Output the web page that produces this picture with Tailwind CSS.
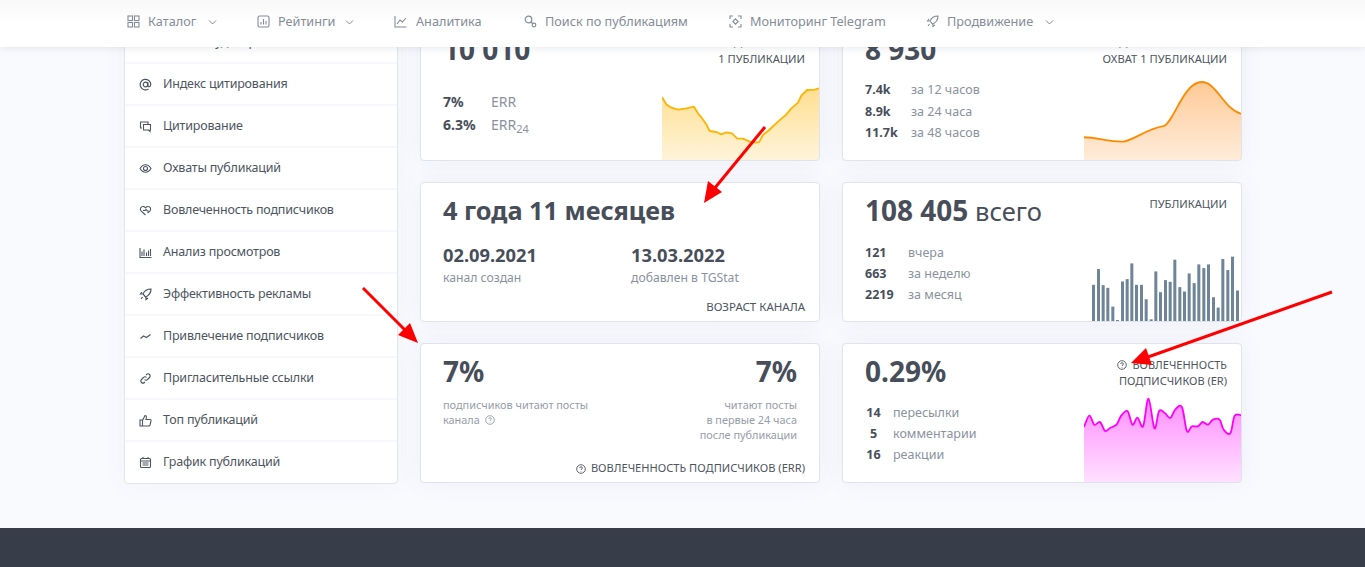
<!DOCTYPE html>
<html lang="ru">
<head>
<meta charset="UTF-8">
<title>TGStat</title>
<script src="https://cdn.jsdelivr.net/npm/@tailwindcss/browser@4"></script>
</head>
<body class="relative h-[567px] overflow-hidden bg-[#f9fafe] font-['Noto_Sans',sans-serif] text-[#474e5a]">

<!-- шапка -->
<header class="relative z-10 h-[47px] bg-gradient-to-b from-[#f8f8f8] via-white to-white shadow-[0_1px_8px_rgba(60,70,90,0.12)]">
    <nav class="flex h-full items-center pb-[3px] pl-[127px] text-[12.7px] text-[#848c97]">
        <a class="flex w-[130px] items-center">
            <svg class="mr-[8px] h-[13px] w-[13px]" viewBox="0 0 13 13" fill="none" stroke="currentColor" stroke-width="1.1"><rect x="1" y="1" width="4.5" height="4.5"/><rect x="7.5" y="1" width="4.5" height="4.5"/><rect x="1" y="7.5" width="4.5" height="4.5"/><rect x="7.5" y="7.5" width="4.5" height="4.5"/></svg>
            <span class="w-[60px]">Каталог</span>
            <svg class="h-[8px] w-[9px]" viewBox="0 0 9 8" fill="none" stroke="currentColor"><path d="M1 2.5l3.5 3.5L8 2.5"/></svg>
        </a>
        <a class="flex w-[137px] items-center">
            <svg class="mr-[8px] h-[13px] w-[13px]" viewBox="0 0 13 13" fill="none" stroke="currentColor" stroke-width="1.1"><rect x="1" y="1" width="11" height="11" rx="1.5"/><path d="M4 9.5V7M6.500 9.500V4M9 9.500V6"/></svg>
            <span class="w-[67px]">Рейтинги</span>
            <svg class="h-[8px] w-[9px]" viewBox="0 0 9 8" fill="none" stroke="currentColor"><path d="M1 2.5l3.500 3.500L8 2.500"/></svg>
        </a>
        <a class="flex w-[130px] items-center">
            <svg class="mr-[9px] h-[13px] w-[13px]" viewBox="0 0 13 13" fill="none" stroke="currentColor" stroke-width="1.1"><path d="M1 1v11h11.500M3 9l3-4 2.500 2L12 3"/></svg>
            <span>Аналитика</span>
        </a>
        <a class="flex w-[205px] items-center">
            <svg class="mr-[8px] h-[13px] w-[13px]" viewBox="0 0 13 13" fill="none" stroke="currentColor" stroke-width="1.2"><circle cx="4.500" cy="4.500" r="3.300"/><path d="M7 7l1.500 1.500"/><circle cx="10" cy="10" r="1.800"/></svg>
            <span>Поиск по публикациям</span>
        </a>
        <a class="flex w-[197px] items-center">
            <svg class="mr-[8px] h-[13px] w-[13px]" viewBox="0 0 13 13" fill="none" stroke="currentColor" stroke-width="1.100"><path d="M1 4V1h3M9 1h3v3M12 9v3H9M4 12H1V9"/><path d="M6.500 3.800l2.700 2.700-2.700 2.700-2.700-2.700z"/></svg>
            <span>Мониторинг Telegram</span>
        </a>
        <a class="flex items-center">
            <svg class="mr-[8px] h-[13px] w-[13px]" viewBox="0 0 13 13" fill="none" stroke="currentColor" stroke-width="1.100"><path d="M12 1c-4 0-6.500 1.500-8 5L6.500 9c3.500-1.500 5.500-4 5.500-8zM4 6H1.500L3 4M7 9v2.500L9 10M3.500 9l-1.500 2"/></svg>
            <span class="w-[98px]">Продвижение</span>
            <svg class="h-[8px] w-[9px]" viewBox="0 0 9 8" fill="none" stroke="currentColor"><path d="M1 2.500l3.500 3.500L8 2.500"/></svg>
        </a>
    </nav>
</header>

<!-- контент, начало прокручено под шапку -->
<main class="-mt-[26px] flex items-start pl-[124px]">
    <aside class="w-[274px] overflow-hidden rounded-[4px] border border-[#e2e5ec] bg-white text-[12.5px] tracking-[-0.2px] text-[#4d5560] shadow-[0_0_24px_rgba(90,100,140,0.05)]">
        <a class="flex h-[42px] items-center border-b-2 border-[#f7f8fc] pl-[14px]"><span class="mr-[11px] h-[13px] w-[13px]"></span>Анализ аудитории</a>
        <a class="flex h-[42px] items-center border-b-2 border-[#f7f8fc] pl-[14px]">
            <svg class="mr-[11px] h-[13px] w-[13px]" viewBox="0 0 13 13" fill="none" stroke="currentColor" stroke-width="1.200"><circle cx="6.500" cy="6.500" r="2.300"/><path d="M8.800 4.200v3.300c0 2 3 1.500 3-1A5.300 5.300 0 1 0 9.500 11"/></svg>Индекс цитирования</a>
        <a class="flex h-[42px] items-center border-b-2 border-[#f7f8fc] pl-[14px]">
            <svg class="mr-[11px] h-[13px] w-[13px]" viewBox="0 0 13 13" fill="none" stroke="currentColor" stroke-width="1.100"><path d="M9 4V2H1.500v6H3M4.500 4.500h7v5.500H11v1.500L9.500 10h-5z"/></svg>Цитирование</a>
        <a class="flex h-[42px] items-center border-b-2 border-[#f7f8fc] pl-[14px]">
            <svg class="mr-[11px] h-[13px] w-[13px]" viewBox="0 0 13 13" fill="none" stroke="currentColor" stroke-width="1.100"><path d="M1 6.500C2.500 4 4.300 2.800 6.500 2.800S10.500 4 12 6.500C10.500 9 8.700 10.200 6.500 10.200S2.500 9 1 6.500z"/><circle cx="6.500" cy="6.500" r="2"/></svg>Охваты публикаций</a>
        <a class="flex h-[42px] items-center border-b-2 border-[#f7f8fc] pl-[14px]">
            <svg class="mr-[11px] h-[13px] w-[13px]" viewBox="0 0 13 13" fill="none" stroke="currentColor" stroke-width="1.100"><path d="M6.500 11L2 6.800C.5 5 1.800 2.500 4 2.500c1 0 1.800.5 2.500 1.300C7.200 3 8 2.500 9 2.500c2.200 0 3.500 2.500 2 4.300L8.500 9M4 6.500h2l1-1 1.500 1.500h1"/></svg>Вовлеченность подписчиков</a>
        <a class="flex h-[42px] items-center border-b-2 border-[#f7f8fc] pl-[14px]">
            <svg class="mr-[11px] h-[13px] w-[13px]" viewBox="0 0 13 13" fill="none" stroke="currentColor" stroke-width="1.100"><path d="M1 2v9.500h11.500M3 10V5.500M5 10V3.500M7.500 10V6.500M9.500 10V4.500M11.500 10V3"/></svg>Анализ просмотров</a>
        <a class="flex h-[42px] items-center border-b-2 border-[#f7f8fc] pl-[14px]">
            <svg class="mr-[11px] h-[13px] w-[13px]" viewBox="0 0 13 13" fill="none" stroke="currentColor" stroke-width="1.200"><path d="M12 1c-4 0-6.500 1.500-8 5L6.500 9c3.500-1.500 5.500-4 5.500-8zM4 6H1.500L3 4M7 9v2.500L9 10M3.500 9l-1.500 2"/></svg>Эффективность рекламы</a>
        <a class="flex h-[42px] items-center border-b-2 border-[#f7f8fc] pl-[14px]">
            <svg class="mr-[11px] h-[13px] w-[13px]" viewBox="0 0 13 13" fill="none" stroke="currentColor" stroke-width="1.200"><path d="M1.500 8.500l3-2.500 3 1.500 4-3"/></svg>Привлечение подписчиков</a>
        <a class="flex h-[42px] items-center border-b-2 border-[#f7f8fc] pl-[14px]">
            <svg class="mr-[11px] h-[13px] w-[13px]" viewBox="0 0 13 13" fill="none" stroke="currentColor" stroke-width="1.100"><path d="M5.500 7.500a2 2 0 0 0 3 0l2-2a2 2 0 0 0-3-3L7 3M7.500 5.500a2 2 0 0 0-3 0l-2 2a2 2 0 0 0 3 3l.5-.5"/></svg>Пригласительные ссылки</a>
        <a class="flex h-[42px] items-center border-b-2 border-[#f7f8fc] pl-[14px]">
            <svg class="mr-[11px] h-[13px] w-[13px]" viewBox="0 0 13 13" fill="none" stroke="currentColor" stroke-width="1.100"><path d="M1 6h2.500v6H1zM3.500 6.500L6 1.500c1 0 1.500.7 1.500 1.500L7 5.500h4c.8 0 1.200.6 1 1.300L11 11c-.2.600-.6 1-1.200 1H3.500"/></svg>Топ публикаций</a>
        <a class="flex h-[41px] items-center pl-[14px]">
            <svg class="mr-[11px] h-[13px] w-[13px]" viewBox="0 0 13 13" fill="none" stroke="currentColor" stroke-width="1.100"><rect x="1.500" y="2.500" width="10" height="9" rx="1"/><path d="M1.500 5h10M4 1v2M9 1v2M3.500 7h6M3.500 9h6" /></svg>График публикаций</a>
    </aside>

    <div class="ml-[22px] grid w-[822px] grid-cols-[400px_400px] gap-x-[22px] gap-y-[21px]">

        <!-- средний охват -->
        <section class="relative h-[140px] overflow-hidden rounded-[4px] border border-[#dfe3ea] bg-white shadow-[0_0_24px_rgba(90,100,140,0.07)]">
            <div class="flex justify-between pl-[22px] pr-[14px] pt-[9px]">
                <span class="text-[28px] font-bold leading-[36px]">10 010</span>
                <span class="pt-[2px] text-right text-[11.2px] leading-[17px] text-[#4d5560]">СРЕДНИЙ ОХВАТ<br>1 ПУБЛИКАЦИИ</span>
            </div>
            <div class="mt-[23px] pl-[22px] text-[14px] leading-[23px]">
                <div class="flex"><b class="w-[48px]">7%</b><span class="text-[#8a929e]">ERR</span></div>
                <div class="flex"><b class="w-[48px]">6.3%</b><span class="text-[#8a929e]">ERR<sub class="text-[11px]">24</sub></span></div>
            </div>
            <svg class="absolute bottom-0 right-0 h-[80px] w-[157px]" viewBox="37 0 471 240" preserveAspectRatio="none">
                <defs><linearGradient id="gy" x1="0" y1="0" x2="0" y2="1"><stop offset="0" stop-color="#ffd36b" stop-opacity=".75"/><stop offset="1" stop-color="#ffd36b" stop-opacity=".25"/></linearGradient></defs>
                <path fill="url(#gy)" d="M37 52L50 73 65 83 85 89 110 85 133 80 145 100 155 112 170 133 180 153 200 156 215 163 230 157 247 160 262 175 280 176 305 187 328 187 340 165 355 153 385 125 410 103 425 85 445 68 455 47 472 30 495 29 508 25V240H37z"/>
                <path fill="none" stroke="#ffb400" stroke-width="5.500" stroke-linejoin="round" d="M37 52L50 73 65 83 85 89 110 85 133 80 145 100 155 112 170 133 180 153 200 156 215 163 230 157 247 160 262 175 280 176 305 187 328 187 340 165 355 153 385 125 410 103 425 85 445 68 455 47 472 30 495 29 508 25"/>
            </svg>
        </section>

        <!-- рекламный охват -->
        <section class="relative h-[140px] overflow-hidden rounded-[4px] border border-[#dfe3ea] bg-white shadow-[0_0_24px_rgba(90,100,140,0.07)]">
            <div class="flex justify-between pl-[22px] pr-[14px] pt-[9px]">
                <span class="text-[28px] font-bold leading-[36px]">8 930</span>
                <span class="pt-[2px] text-right text-[11.2px] leading-[17px] text-[#4d5560]">СРЕДНИЙ РЕКЛАМНЫЙ<br>ОХВАТ 1 ПУБЛИКАЦИИ</span>
            </div>
            <div class="mt-[12px] pl-[22px] text-[12.5px] leading-[21.500px]">
                <div class="flex"><b class="w-[46px]">7.4k</b><span class="text-[#8a929e]">за 12 часов</span></div>
                <div class="flex"><b class="w-[46px]">8.9k</b><span class="text-[#8a929e]">за 24 часа</span></div>
                <div class="flex"><b class="w-[46px]">11.7k</b><span class="text-[#8a929e]">за 48 часов</span></div>
            </div>
            <svg class="absolute bottom-0 right-0 h-[83px] w-[157px]" viewBox="732 140 471 248" preserveAspectRatio="none">
                <defs><linearGradient id="go" x1="0" y1="0" x2="0" y2="1"><stop offset="0" stop-color="#ffb36b" stop-opacity=".7"/><stop offset="1" stop-color="#ffb36b" stop-opacity=".25"/></linearGradient></defs>
                <path fill="url(#go)" d="M732 320C770 320 810 335 850 333C880 330 920 295 970 287C1000 280 1030 155 1085 155C1130 155 1150 235 1203 250V388H732z"/>
                <path fill="none" stroke="#ff8a00" stroke-width="5.500" d="M732 320C770 320 810 335 850 333C880 330 920 295 970 287C1000 280 1030 155 1085 155C1130 155 1150 235 1203 250"/>
            </svg>
        </section>

        <!-- возраст канала -->
        <section class="relative h-[140px] rounded-[4px] border border-[#dfe3ea] bg-white pl-[22px] pt-[9px] shadow-[0_0_24px_rgba(90,100,140,0.07)]">
            <div class="text-[25.3px] font-bold leading-[36px]">4 года 11 месяцев</div>
            <div class="mt-[16px] flex">
                <div class="w-[188px]">
                    <div class="text-[18.3px] font-bold leading-[22px]">02.09.2021</div>
                    <div class="mt-[2px] text-[12.2px] leading-[20px] text-[#8a929e]">канал создан</div>
                </div>
                <div>
                    <div class="text-[18.3px] font-bold leading-[22px]">13.03.2022</div>
                    <div class="mt-[2px] text-[12.2px] leading-[20px] text-[#8a929e]">добавлен в TGStat</div>
                </div>
            </div>
            <div class="absolute bottom-[6px] right-[14px] text-[11.5px] text-[#4d5560]">ВОЗРАСТ КАНАЛА</div>
        </section>

        <!-- публикации -->
        <section class="relative h-[140px] overflow-hidden rounded-[4px] border border-[#dfe3ea] bg-white shadow-[0_0_24px_rgba(90,100,140,0.07)]">
            <div class="flex justify-between pl-[22px] pr-[14px] pt-[9px]">
                <span class="text-[25.5px] leading-[36px]"><b class="text-[28px]">108 405</b> всего</span>
                <span class="pt-[3px] text-[11.2px] leading-[17px] text-[#4d5560]">ПУБЛИКАЦИИ</span>
            </div>
            <div class="mt-[13px] pl-[22px] text-[12.5px] leading-[21px]">
                <div class="flex"><b class="w-[43px]">121</b><span class="text-[#8a929e]">вчера</span></div>
                <div class="flex"><b class="w-[43px]">663</b><span class="text-[#8a929e]">за неделю</span></div>
                <div class="flex"><b class="w-[43px]">2219</b><span class="text-[#8a929e]">за месяц</span></div>
            </div>
            <svg class="absolute bottom-0 right-[1px] h-[68px] w-[150px]" viewBox="90 220 450 203" preserveAspectRatio="none" fill="#6e8499">
                <rect x="96" y="315" width="9" height="108"/><rect x="111" y="268" width="9" height="155"/><rect x="125" y="316" width="9" height="107"/><rect x="139" y="324" width="9" height="99"/><rect x="154" y="380" width="9" height="43"/><rect x="168" y="420" width="9" height="3"/><rect x="183" y="305" width="9" height="118"/><rect x="197" y="298" width="9" height="125"/><rect x="211" y="251" width="9" height="172"/><rect x="225" y="315" width="9" height="108"/><rect x="240" y="315" width="9" height="108"/><rect x="254" y="358" width="9" height="65"/><rect x="269" y="418" width="9" height="5"/><rect x="283" y="275" width="9" height="148"/><rect x="297" y="337" width="9" height="86"/><rect x="312" y="301" width="9" height="122"/><rect x="326" y="306" width="9" height="117"/><rect x="340" y="240" width="9" height="183"/><rect x="355" y="322" width="9" height="101"/><rect x="369" y="335" width="9" height="88"/><rect x="383" y="281" width="9" height="142"/><rect x="398" y="310" width="9" height="113"/><rect x="412" y="254" width="9" height="169"/><rect x="427" y="265" width="9" height="158"/><rect x="441" y="254" width="9" height="169"/><rect x="456" y="352" width="9" height="71"/><rect x="470" y="383" width="9" height="40"/><rect x="484" y="238" width="9" height="185"/><rect x="499" y="271" width="9" height="152"/><rect x="513" y="231" width="9" height="192"/><rect x="528" y="332" width="9" height="91"/>
            </svg>
        </section>

        <!-- ERR -->
        <section class="relative h-[140px] rounded-[4px] border border-[#dfe3ea] bg-white px-[22px] pt-[9px] shadow-[0_0_24px_rgba(90,100,140,0.07)]">
            <div class="flex justify-between text-[28px] font-bold leading-[36px]"><span>7%</span><span>7%</span></div>
            <div class="mt-[8px] flex justify-between text-[10.9px] leading-[15px] text-[#969da8]">
                <div class="w-[160px]">подписчиков читают посты канала
                    <svg class="ml-[2px] inline h-[10px] w-[10px] align-[-1px]" viewBox="0 0 10 10" fill="none" stroke="currentColor" stroke-width=".9"><circle cx="5" cy="5" r="4.300"/><path d="M3.700 4c0-1.700 2.700-1.700 2.700 0 0 .9-1.400 1-1.400 2M5 7.300v.5"/></svg>
                </div>
                <div class="text-right">читают посты<br>в первые 24 часа<br>после публикации</div>
            </div>
            <div class="absolute bottom-[5px] right-[14px] flex items-center text-[11.1px] text-[#4d5560]">
                <svg class="mr-[5px] h-[10px] w-[10px]" viewBox="0 0 10 10" fill="none" stroke="currentColor" stroke-width=".9"><circle cx="5" cy="5" r="4.300"/><path d="M3.700 4c0-1.700 2.700-1.700 2.700 0 0 .9-1.400 1-1.400 2M5 7.300v.5"/></svg>
                ВОВЛЕЧЕННОСТЬ ПОДПИСЧИКОВ (ERR)
            </div>
        </section>

        <!-- ER -->
        <section class="relative h-[140px] overflow-hidden rounded-[4px] border border-[#dfe3ea] bg-white shadow-[0_0_24px_rgba(90,100,140,0.07)]">
            <div class="flex justify-between pl-[22px] pr-[14px] pt-[9px]">
                <span class="text-[28px] font-bold leading-[36px]">0.29%</span>
                <span class="pt-[4px] text-right text-[11px] leading-[16px] text-[#4d5560]">
                    <svg class="mr-[3px] inline h-[10px] w-[10px] align-[-1px]" viewBox="0 0 10 10" fill="none" stroke="currentColor" stroke-width=".9"><circle cx="5" cy="5" r="4.300"/><path d="M3.700 4c0-1.700 2.700-1.700 2.700 0 0 .9-1.400 1-1.400 2M5 7.300v.5"/></svg>
                    ВОВЛЕЧЕННОСТЬ<br>ПОДПИСЧИКОВ (ER)</span>
            </div>
            <div class="mt-[13px] pl-[22px] text-[12.5px] leading-[21px]">
                <div class="flex"><b class="w-[17px] text-center">14</b><span class="ml-[11px] text-[#8a929e]">пересылки</span></div>
                <div class="flex"><b class="w-[17px] text-center">5</b><span class="ml-[11px] text-[#8a929e]">комментарии</span></div>
                <div class="flex"><b class="w-[17px] text-center">16</b><span class="ml-[11px] text-[#8a929e]">реакции</span></div>
            </div>
            <svg class="absolute bottom-0 right-0 h-[85px] w-[157px]" viewBox="72 170 470 255" preserveAspectRatio="none">
                <defs><linearGradient id="gm" x1="0" y1="0" x2="0" y2="1"><stop offset="0" stop-color="#ff00ff" stop-opacity=".45"/><stop offset="1" stop-color="#ff00ff" stop-opacity=".12"/></linearGradient></defs>
                <path id="er-fill" fill="url(#gm)"/>
                <path id="er-line" fill="none" stroke="#ff00ff" stroke-width="5.500" stroke-linejoin="round"/>
            </svg>
        </section>
    </div>
</main>

<footer class="absolute inset-x-0 top-[528px] h-[39px] bg-[#373e4a]"></footer>

<!-- красные стрелки поверх скриншота -->
<svg class="absolute left-0 top-0 z-20 h-[567px] w-[1365px]" viewBox="0 0 1365 567" fill="#ff0000" stroke="#ff0000" stroke-width="3">
    <path d="M765 127L714 189"/><path stroke="none" d="M704 203L708 181 722 192z"/>
    <path d="M363 288L407 332"/><path stroke="none" d="M418 343L398 335 410 323z"/>
    <path d="M1332 292L1148 357"/><path stroke="none" d="M1131 363L1146 348 1152 365z"/>
</svg>

<script>
    // сглаживаем линию ER (catmull-rom -> bezier)
    const erPoints = [[72,260],[88,226],[103,253],[120,245],[135,272],[150,263],[170,252],[182,228],[202,212],[217,253],[232,232],[249,258],[265,175],[283,264],[297,212],[315,219],[330,233],[345,208],[365,200],[380,272],[395,258],[413,258],[427,245],[443,253],[458,238],[478,238],[490,268],[510,279],[523,226],[542,225]];
    let d = `M${erPoints[0]}`;
    for (let i = 0; i < erPoints.length - 1; i++) {
        const p0 = erPoints[i-1] || erPoints[i], p1 = erPoints[i], p2 = erPoints[i+1], p3 = erPoints[i+2] || p2;
        d += `C${p1[0]+(p2[0]-p0[0])/6} ${p1[1]+(p2[1]-p0[1])/6} ${p2[0]-(p3[0]-p1[0])/6} ${p2[1]-(p3[1]-p1[1])/6} ${p2[0]} ${p2[1]}`;
    }
    document.getElementById('er-line').setAttribute('d', d);
    document.getElementById('er-fill').setAttribute('d', d + 'V425H72z');
</script>
</body>
</html>
